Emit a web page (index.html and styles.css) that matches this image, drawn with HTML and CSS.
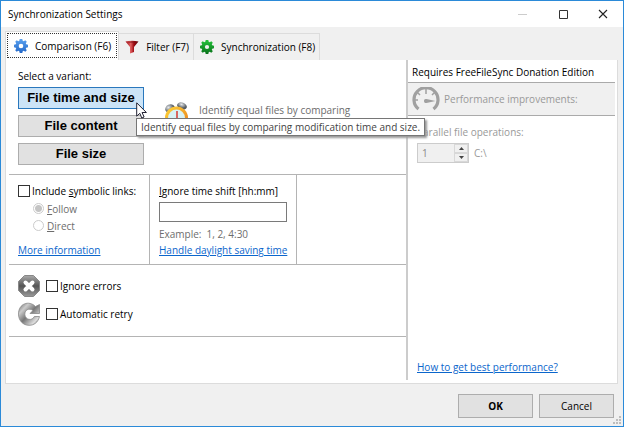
FILE: index.html
```
<!DOCTYPE html>
<html lang="en">
<head>
<meta charset="utf-8">
<title>Synchronization Settings</title>
<link rel="stylesheet" href="styles.css">
</head>
<body>
<div class="window">
  <header class="titlebar">
    <h1 class="title">Synchronization Settings</h1>
    <div class="window-controls">
      <button class="window-button" type="button" aria-label="Minimize" disabled><svg width="10" height="10"><path d="M0 5.5h9" stroke="#ccc"/></svg></button>
      <button class="window-button" type="button" aria-label="Maximize"><svg width="10" height="10"><path d="M1.5 1.5h8v8h-8z" fill="none" stroke="#333"/></svg></button>
      <button class="window-button" type="button" aria-label="Close"><svg width="10" height="10"><path d="M1 1l8 8M9 1l-8 8" stroke="#222" stroke-width="1.1"/></svg></button>
    </div>
  </header>

  <main class="body">
    <div class="tabs" role="tablist">
      <button class="tab tab-active" type="button" role="tab" aria-selected="true">
        <svg width="14" height="14" viewBox="0 0 14 14"><defs><linearGradient id="blue" x2="0" y2="1"><stop stop-color="#5aa2f0"/><stop offset="1" stop-color="#2468c8"/></linearGradient></defs><path fill="url(#blue)" fill-rule="evenodd" d="M5.700 0h2.600l.4 1.800 1 .4 1.600-1 1.500 1.500-1 1.600.4 1 1.800.4v2.600l-1.800.4-.4 1 1 1.600-1.500 1.500-1.600-1-1 .4-.4 1.800H5.700l-.4-1.800-1-.4-1.600 1-1.500-1.500 1-1.600-.4-1L0 8.300V5.700l1.800-.4.4-1-1-1.600 1.500-1.500 1.600 1 1-.4zM7 4.700a2.300 2.300 0 1 0 0 4.600 2.300 2.300 0 0 0 0-4.600z"/></svg>
        <span>Comparison (F6)</span>
      </button>
      <button class="tab" type="button" role="tab" aria-selected="false">
        <svg width="14" height="14" viewBox="0 0 14 14"><defs><linearGradient id="red"><stop stop-color="#a01018"/><stop offset=".4" stop-color="#e06060"/><stop offset=".65" stop-color="#9c0810"/><stop offset="1" stop-color="#58070b"/></linearGradient></defs><path d="M.5 1.500L5 7v6.500l4-1.500V7l4.500-5.500Q7-.2.500 1.500z" fill="url(#red)"/><path d="M2.300 2Q7 .8 11.700 2 7 3.200 2.300 2z" fill="#7c1218"/></svg>
        <span>Filter (F7)</span>
      </button>
      <button class="tab" type="button" role="tab" aria-selected="false">
        <svg width="14" height="14" viewBox="0 0 14 14"><defs><linearGradient id="green" x2="0" y2="1"><stop stop-color="#25c43c"/><stop offset="1" stop-color="#08701a"/></linearGradient></defs><path fill="url(#green)" fill-rule="evenodd" d="M5.700 0h2.600l.4 1.800 1 .4 1.600-1 1.500 1.500-1 1.600.4 1 1.800.4v2.600l-1.800.4-.4 1 1 1.600-1.500 1.500-1.600-1-1 .4-.4 1.800H5.700l-.4-1.800-1-.4-1.600 1-1.500-1.500 1-1.600-.4-1L0 8.300V5.700l1.800-.4.4-1-1-1.600 1.500-1.500 1.600 1 1-.4zM7 4.900a2.100 2.100 0 1 0 0 4.200 2.100 2.100 0 0 0 0-4.200z"/></svg>
        <span>Synchronization (F8)</span>
      </button>
    </div>

    <div class="panel" role="tabpanel">
      <div class="settings">
        <section class="variants">
          <div class="variant-list">
            <p class="text">Select a variant:</p>
            <div class="tip-anchor">
              <button class="variant variant-active" type="button" aria-describedby="tip">File time and size</button>
              <svg class="cursor" width="13" height="19" viewBox="0 0 13 19"><path d="M.7.800v13.400l3.100-2.900 2 4.700 2.300-1-2-4.500h4.300z" fill="#fff" stroke="#223" stroke-width="1"/></svg>
              <div class="tooltip" id="tip" role="tooltip">Identify equal files by comparing modification time and size.</div>
            </div>
            <button class="variant" type="button">File content</button>
            <button class="variant" type="button">File size</button>
          </div>
          <div class="description">
            <svg width="26" height="28" viewBox="0 0 26 28"><defs><radialGradient id="bell" cx=".4" cy=".3"><stop stop-color="#e8eaec"/><stop offset="1" stop-color="#555c63"/></radialGradient><linearGradient id="rim" x2="1" y2="1"><stop stop-color="#ffd83a"/><stop offset="1" stop-color="#e87818"/></linearGradient></defs><ellipse cx="6" cy="6.500" rx="5" ry="4" fill="url(#bell)" transform="rotate(-25 6 6.500)"/><ellipse cx="18" cy="4" rx="5" ry="3.400" fill="url(#bell)" transform="rotate(20 18 4)"/><circle cx="12.500" cy="16" r="11.500" fill="url(#rim)"/><circle cx="12.500" cy="16" r="8.500" fill="#d8f2f4"/><path d="M13 9v8" stroke="#d83830" stroke-width="1.500"/></svg>
            <p class="text muted">Identify equal files by comparing</p>
          </div>
        </section>

        <div class="options">
          <section class="option links">
            <label class="check"><input class="checkbox" type="checkbox"><span>Include <u>s</u>ymbolic links:</span></label>
            <div class="radios">
              <label class="check muted"><input class="radio" type="radio" name="links" checked disabled><span><u>F</u>ollow</span></label>
              <label class="check muted"><input class="radio" type="radio" name="links" disabled><span><u>D</u>irect</span></label>
            </div>
            <a class="link" href="#">More information</a>
          </section>
          <section class="option shift">
            <label class="text" for="shift"><u>I</u>gnore time shift [hh:mm]</label>
            <input class="field" id="shift" type="text">
            <p class="text muted example"><span>Example:</span><span>1, 2, 4:30</span></p>
            <a class="link" href="#">Handle daylight saving time</a>
          </section>
        </div>

        <section class="errors">
          <div class="error-row">
            <svg width="22" height="22" viewBox="0 0 22 22"><defs><linearGradient id="steel" x2="0" y2="1"><stop stop-color="#aaa"/><stop offset=".5" stop-color="#555"/><stop offset="1" stop-color="#999"/></linearGradient></defs><path d="M6.500.500h9l6 6v9l-6 6h-9l-6-6v-9z" fill="url(#steel)" stroke="#888"/><path d="M7.500 7.500l7 7M14.500 7.500l-7 7" stroke="#fff" stroke-width="4" stroke-linecap="round"/></svg>
            <label class="check"><input class="checkbox" type="checkbox"><span>Ignore errors</span></label>
          </div>
          <div class="error-row">
            <svg width="22" height="24" viewBox="0 0 22 24"><defs><linearGradient id="silver" x2="1" y2="1"><stop stop-color="#666"/><stop offset=".25" stop-color="#ccc"/><stop offset=".5" stop-color="#777"/><stop offset=".8" stop-color="#ddd"/><stop offset="1" stop-color="#777"/></linearGradient></defs><path d="M17.500 4.500L21.500 2.500v9h-9.500l3-3C11 5.500 6.800 8 6.800 12.300c.2 5.700 7.500 7 9.500 2.200h5.200C20 20.500 16 23.300 11 23.300 4.500 23.300.500 18 .500 12 .500 1.500 11-2 17.500 4.500z" fill="url(#silver)" stroke="#888" stroke-width=".8"/></svg>
            <label class="check"><input class="checkbox" type="checkbox"><span>Automatic retry</span></label>
          </div>
        </section>
      </div>

      <aside class="performance">
        <h2 class="heading">Requires FreeFileSync Donation Edition</h2>
        <div class="banner">
          <svg width="28" height="24" viewBox="0 0 28 24"><path d="M6.500 22A12 12 0 1 1 21.500 22" fill="none" stroke="#a0a0a0" stroke-width="3.200"/><path d="M14 2v5M5 5l3 3M23 5l-3 3M2 13h4" stroke="#a0a0a0" stroke-width="1.500"/><path d="M12 14a2 2 0 0 1 2.500-2l9 2-9 2A2 2 0 0 1 12 14z" fill="#a0a0a0"/></svg>
          <span>Performance improvements:</span>
        </div>
        <div class="parallel">
          <label class="text" for="ops">Parallel file operations:</label>
          <div class="ops-row">
            <div class="spinner">
              <input class="spin-value" id="ops" type="text" inputmode="numeric" value="1" disabled>
              <div class="spin-buttons">
                <button class="spin" type="button" aria-label="Increase" disabled><svg width="5" height="3"><path d="M0 3l2.500-3L5 3z" fill="#444"/></svg></button>
                <button class="spin" type="button" aria-label="Decrease" disabled><svg width="5" height="3"><path d="M0 0l2.500 3L5 0z" fill="#444"/></svg></button>
              </div>
            </div>
            <span>C:\</span>
          </div>
        </div>
        <a class="link best" href="#">How to get best performance?</a>
      </aside>
    </div>
  </main>

  <footer class="footer">
    <button class="action action-default" type="button">OK</button>
    <button class="action" type="button">Cancel</button>
    <svg class="grip" width="8" height="8"><path d="M6 0h2v2H6zM3 3h2v2H3zM6 3h2v2H6zM0 6h2v2H0zM3 6h2v2H3zM6 6h2v2H6z" fill="#bdbdbd"/></svg>
  </footer>
</div>
</body>
</html>
```
FILE: styles.css
```
* { box-sizing: border-box; }

body {
  margin: 0;
  font: 10px/16px "Open Sans", "Noto Sans", sans-serif;
  color: #000;
}

button, input {
  font: inherit;
  color: inherit;
  margin: 0;
  padding: 0;
}

h1, h2, p { margin: 0; font-size: inherit; font-weight: 400; }
svg { display: block; flex: none; }

.window {
  position: relative;
  display: flex;
  flex-direction: column;
  min-height: 100vh;
  border: 1px solid #2b8ad8;
  background: #f0f0f0;
}

.titlebar {
  display: flex;
  align-items: center;
  justify-content: space-between;
  height: 26px;
  padding-left: 7px;
  background: #fff;
}

.window-controls { display: flex; }

.window-button {
  display: flex;
  align-items: center;
  justify-content: center;
  width: 40px;
  height: 26px;
  border: 0;
  background: none;
}

.body {
  flex: 1;
  display: flex;
  flex-direction: column;
  padding: 4px 5px 0 4px;
}

.tabs { display: flex; align-items: flex-end; }

.tab {
  display: flex;
  align-items: center;
  gap: 7px;
  height: 27px;
  padding: 0 4px 0 6px;
  border: 1px solid #dcdcdc;
  border-width: 1px 1px 0 0;
  background: #f0f0f0;
  white-space: nowrap;
}

.tab-active {
  height: 29px;
  padding: 0 7px 0 8px;
  border-left-width: 1px;
  background: #fff;
  outline: 1px dotted #333;
  outline-offset: -3px;
}

.panel {
  flex: 1;
  display: flex;
  padding: 0 2px 3px 3px;
  border: 1px solid #dcdcdc;
  border-top: 0;
  background: #fff;
}

.settings {
  flex: 1;
  border-right: 2px solid #ccc;
}

.variants {
  display: flex;
  gap: 20px;
  height: 115px;
  padding: 8px 9px 0;
  border-bottom: 1px solid #b4b4b4;
}

.variant-list {
  display: flex;
  flex-direction: column;
  gap: 6px;
  width: 126px;
}

.variant-list .text { margin-bottom: -3px; }

.variant {
  width: 100%;
  height: 22px;
  border: 1px solid #adadad;
  background: #e1e1e1;
  color: #000;
  font: bold 13px/20px "Liberation Sans", Arial, sans-serif;
}

.variant-active { border-color: #2a78bd; background: #cce4f7; }

.tip-anchor { position: relative; height: 22px; }

.cursor { position: absolute; left: 118px; top: 15px; z-index: 2; }

.tooltip {
  position: absolute;
  left: 118px;
  top: 31px;
  z-index: 1;
  padding: 0 4px;
  border: 1px solid #767676;
  background: #fff;
  box-shadow: 2px 2px 2px #999;
  color: #444;
  white-space: nowrap;
}

.description {
  display: flex;
  gap: 9px;
  padding-top: 34px;
  white-space: nowrap;
}

.muted { color: #6d6d6d; }

.options {
  display: flex;
  height: 90px;
  border-bottom: 1px solid #b4b4b4;
}

.option {
  display: flex;
  flex-direction: column;
  align-items: flex-start;
  padding: 8px 9px 0;
  border-right: 1px solid #b4b4b4;
  white-space: nowrap;
}

.links { width: 141px; }

.check { display: flex; align-items: center; gap: 2px; }

.checkbox {
  appearance: none;
  width: 12px;
  height: 12px;
  border: 1px solid #333;
  background: #fff;
}

.radios { margin: 1px 0 8px 15px; }
.radios .check { gap: 3px; height: 17px; }

.radio {
  appearance: none;
  width: 11px;
  height: 11px;
  border: 1px solid #ccc;
  border-radius: 50%;
  background: #fff;
}

.radio:checked { background: radial-gradient(circle, #c4c4c4 3px, #fff 4px); }

.link { color: #0b66cc; text-underline-offset: 1px; }

.field {
  width: 128px;
  height: 20px;
  margin: 3px 0 4px;
  border: 1px solid #7a7a7a;
  background: #fff;
}

.example { display: flex; gap: 5px; }

.errors {
  display: flex;
  flex-direction: column;
  gap: 5px;
  height: 72px;
  padding: 10px 9px 0;
  border-bottom: 1px solid #b4b4b4;
}

.error-row { display: flex; align-items: center; gap: 6px; }

.performance {
  display: flex;
  flex-direction: column;
  width: 207px;
  color: #999;
}

.heading {
  height: 23px;
  padding: 4px 4px 0;
  border-bottom: 1px solid #aaa;
  color: #000;
  white-space: nowrap;
}

.banner {
  display: flex;
  align-items: center;
  gap: 4px;
  height: 33px;
  padding-left: 4px;
  border-bottom: 1px solid #aaa;
  background: #f0f0f0;
}

.parallel { padding: 8px 9px 0; }

.ops-row { display: flex; align-items: center; gap: 5px; margin-top: 3px; }

.spinner {
  display: flex;
  width: 52px;
  height: 20px;
  border: 1px solid #ccc;
  background: #f0f0f0;
}

.spin-value {
  flex: 1;
  min-width: 0;
  padding-left: 4px;
  border: 0;
  background: none;
  color: #888;
}

.spin-buttons { display: flex; flex-direction: column; width: 14px; }

.spin {
  flex: 1;
  display: flex;
  align-items: center;
  justify-content: center;
  border: 1px solid #d8d8d8;
  background: #f0f0f0;
}

.best { margin: auto 9px 5px; }

.footer {
  display: flex;
  justify-content: flex-end;
  gap: 6px;
  padding: 10px 9px 8px;
}

.action {
  width: 75px;
  height: 24px;
  border: 1px solid #adadad;
  background: #e1e1e1;
}

.action-default { font-weight: 700; }

.grip { position: absolute; right: 2px; bottom: 2px; }
```
